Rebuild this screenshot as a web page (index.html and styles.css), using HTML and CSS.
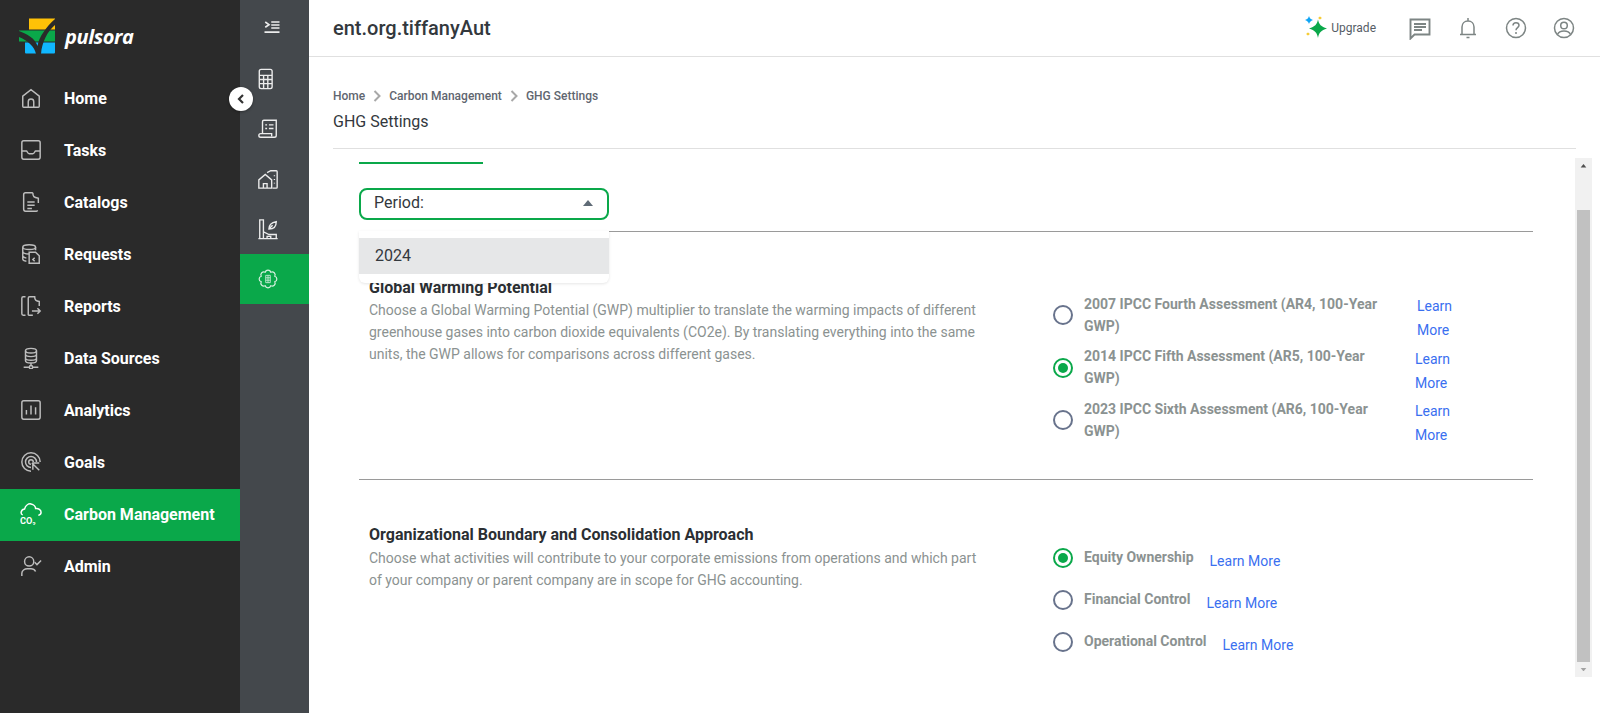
FILE: index.html
```html
<!DOCTYPE html>
<html lang="en">
<head>
<meta charset="utf-8">
<title>GHG Settings</title>
<link rel="stylesheet" href="styles.css">
</head>
<body>
<div class="app">
  <aside class="sidebar">
    <div class="brand">
      <svg class="logo" viewBox="0 0 40 40" width="40" height="40">
        <path d="M10 1.500h26v11H10z" fill="#ffc107"/>
        <path d="M0 13.500h36v11H0z" fill="#0aa84a"/>
        <path d="M6 25.500h30v10a1 1 0 0 1-1 1H7a1 1 0 0 1-1-1z" fill="#10b7ff"/>
        <path d="M0 14C8 17 16 21 18.500 29 20 20 27 10 36 2v6C28 15 23 25 22 37h-5C16 30 8 23 0 20z" fill="#2a2a2a"/>
      </svg>
      <span class="brand-name">pulsora</span>
    </div>
    <nav class="nav">
      <a class="nav-item"><svg class="nav-icon" viewBox="0 0 24 24"><path d="M3 21V10l9-7 9 7v11a1 1 0 0 1-1 1H4a1 1 0 0 1-1-1zM9 22v-6a3 3 0 0 1 6 0v6"/></svg><span>Home</span></a>
      <a class="nav-item"><svg class="nav-icon" viewBox="0 0 24 24"><rect x="2" y="2" width="20" height="20" rx="2"/><path d="M2 13h5c1 0 1 3 3 3h4c2 0 2-3 3-3h5"/></svg><span>Tasks</span></a>
      <a class="nav-item"><svg class="nav-icon" viewBox="0 0 24 24"><path d="M14 2H6a2 2 0 0 0-2 2v16a2 2 0 0 0 2 2h12a1 1 0 0 0 1-1M14 2c0 4 1 5 6 6v5M8 12h8M8 15.500h8M8 19h5"/></svg><span>Catalogs</span></a>
      <a class="nav-item"><svg class="nav-icon" viewBox="0 0 24 24"><ellipse cx="10" cy="4.500" rx="7" ry="2.500"/><path d="M3 4.500v13c0 1 1 2 4 2.500M3 9c0 2 4 3 7 3M3 14c0 1 1.500 2 4 2.500M17 4.500V8M10 10h7l4 4v8H10zM16 16l-2 2 2 2"/></svg><span>Requests</span></a>
      <a class="nav-item"><svg class="nav-icon" viewBox="0 0 24 24"><path d="M6 2H3.500A1.500 1.500 0 0 0 2 3.500v17A1.500 1.500 0 0 0 3.500 22H6M9 22V3.500A1.500 1.500 0 0 1 10.500 2H16c0 3 1 5 5 5v5M9 22h5M13 17.500h9M19 14.500l3 3-3 3"/></svg><span>Reports</span></a>
      <a class="nav-item"><svg class="nav-icon" viewBox="0 0 24 24"><ellipse cx="12" cy="4" rx="6" ry="2.500"/><path d="M6 4v11c0 1.500 3 2.500 6 2.500s6-1 6-2.500V4M6 8c0 1.500 3 2.500 6 2.500S18 9.500 18 8M6 12c0 1.500 3 2.500 6 2.500s6-1 6-2.500M12 17.500V20M4 22h6M14 22h6"/><circle cx="12" cy="22" r="1.800"/></svg><span>Data Sources</span></a>
      <a class="nav-item"><svg class="nav-icon" viewBox="0 0 24 24"><rect x="2" y="2" width="20" height="20" rx="2"/><path d="M7 17v-5M12 17V7M17 17v-8"/></svg><span>Analytics</span></a>
      <a class="nav-item"><svg class="nav-icon" viewBox="0 0 24 24"><path d="M12 22a10 10 0 1 1 10-10M12 18a6 6 0 1 1 6-6M12 14.500a2.500 2.500 0 1 1 2.500-2.500M13 13l8 8M14 20.500V13h7"/></svg><span>Goals</span></a>
      <a class="nav-item active"><svg class="nav-icon" viewBox="0 0 24 24"><path d="M3 13c-3-1-2-6 2-6.500C6 3 9 .5 12 1c3 .5 5 3 5 5 3-.5 6 1.500 6 4 0 2-1 3-3 3.500"/><text x="0" y="23" class="co-text">CO₂</text></svg><span>Carbon Management</span></a>
      <a class="nav-item"><svg class="nav-icon" viewBox="0 0 24 24"><circle cx="10" cy="7" r="5"/><path d="M2 23v-3c0-3 3-5 6-5h4c2 0 4 1 5 3M16 8l2.500 2.500L23 6"/></svg><span>Admin</span></a>
    </nav>
    <button class="collapse" type="button" aria-label="Collapse"><svg viewBox="0 0 12 12" width="12" height="12"><path d="M8 2L4 6l4 4" fill="none" stroke="#333" stroke-width="2.200"/></svg></button>
  </aside>

  <div class="rail">
    <div class="rail-item toggle"><svg class="rail-icon" viewBox="0 0 24 24"><path d="M3 4l5 3.500-5 3.500M11 4h11M11 8h11M11 12h11M2 17.500h20"/></svg></div>
    <div class="rail-item"><svg class="rail-icon" viewBox="0 0 24 24"><rect x="2.500" y="1.500" width="14" height="21" rx="2"/><path d="M2.500 8h14M2.500 12.500h14M2.500 17h14M7.200 8v14M11.800 8v14"/></svg></div>
    <div class="rail-item"><svg class="rail-icon" viewBox="0 0 24 24"><path d="M6 17V4a1.500 1.500 0 0 1 1.500-1.500H21V19a2 2 0 0 1-2 2H4a2 2 0 0 1-2-2c0-1 1-2 2-2h12v3M9 7.500h2M13 7.500h5M9 11.500h2M13 11.500h5"/></svg></div>
    <div class="rail-item"><svg class="rail-icon" viewBox="0 0 24 24"><path d="M2 22V13l7-6 7 6v9zM7 22v-5h4v5M11 5l4-2h6a1 1 0 0 1 1 1v17a1 1 0 0 1-1 1h-4M19 8v1M19 12v1M19 16v1"/></svg></div>
    <div class="rail-item"><svg class="rail-icon" viewBox="0 0 24 24"><path d="M1.500 22.500h21M3 22.500V2h4v20.500M7 15l6 3h8v4.500M11 22.500V20h4v2.500M13 12c0-4 3-7 8-8 0 5-3 8-8 8zM13 12l4-4"/></svg></div>
    <div class="rail-item active"><svg class="rail-icon" viewBox="0 0 24 24"><path d="M19.390 8.940A3.200 3.200 0 0 1 19.390 15.060A3.200 3.200 0 0 1 15.060 19.390A3.200 3.200 0 0 1 8.940 19.390A3.200 3.200 0 0 1 4.610 15.060A3.200 3.200 0 0 1 4.610 8.940A3.200 3.200 0 0 1 8.940 4.610A3.200 3.200 0 0 1 15.060 4.610A3.200 3.200 0 0 1 19.390 8.940z"/><path class="grid" d="M9.500 8h5v8h-5zM9.500 10.700h5M9.500 13.300h5M12 8v8"/></svg></div>
  </div>

  <main class="main">
    <header class="topbar">
      <h1 class="org">ent.org.tiffanyAut</h1>
      <div class="top-actions">
        <a class="upgrade">
          <svg viewBox="0 0 26 26" width="26" height="26">
            <path d="M14 4.500c1 5 3 7 9 9-6 2-8 4-9 9.500-1-5.500-3-7.500-9-9.500 6-2 8-4 9-9z" fill="#0aa84a"/>
            <path d="M5 1c.5 2 1.500 3 4 4-2.500 1-3.500 2-4 4-.5-2-1.500-3-4-4 2.500-1 3.500-2 4-4z" fill="#10a5f5"/>
            <path d="M16 1c.3 1 .7 1.500 2 2-1.300.5-1.700 1-2 2-.3-1-.7-1.500-2-2 1.300-.5 1.700-1 2-2zM4 17c.3 1 .7 1.500 2 2-1.300.5-1.700 1-2 2-.3-1-.7-1.500-2-2 1.300-.5 1.700-1 2-2z" fill="#f5c518"/>
          </svg>
          <span>Upgrade</span>
        </a>
        <svg class="top-icon chat" viewBox="0 0 24 24"><path d="M2.500 3.500h19v15H6.500l-4 4zM6 8h12M6 11h12M6 14h8"/></svg>
        <svg class="top-icon" viewBox="0 0 24 24"><path d="M4 18.500h16M6 18.500V11c0-3.500 2.500-6 6-6s6 2.500 6 6v7.500M12 2v3M10.500 21.500h3"/></svg>
        <svg class="top-icon" viewBox="0 0 24 24"><circle cx="12" cy="12" r="9.500"/><path d="M9 9.500C9 7.500 10.500 6.700 12 6.700c1.700 0 3 1 3 2.600 0 2.300-3 2.300-3 5M12 16v2"/></svg>
        <svg class="top-icon" viewBox="0 0 24 24"><circle cx="12" cy="12" r="9.500"/><circle cx="12" cy="9.500" r="3.300"/><path d="M5.500 18.500c1-2.500 3.500-3.500 6.500-3.500s5.500 1 6.500 3.500"/></svg>
      </div>
    </header>

    <div class="page">
      <div class="page-head">
        <div class="crumbs">
          <span>Home</span><svg class="sep" viewBox="0 0 8 12"><path d="M1.500 1l5 5-5 5"/></svg>
          <span>Carbon Management</span><svg class="sep" viewBox="0 0 8 12"><path d="M1.500 1l5 5-5 5"/></svg>
          <span>GHG Settings</span>
        </div>
        <h2 class="page-title">GHG Settings</h2>
      </div>

      <div class="panel">
        <div class="panel-body">
          <div class="tab-line"></div>
          <div class="select-wrap">
            <div class="select"><span>Period:</span><svg viewBox="0 0 10 6" width="10" height="6"><path d="M0 6l5-6 5 6z" fill="#5f6b76"/></svg></div>
            <div class="dropdown"><div class="option">2024</div></div>
          </div>
          <section class="setting first">
            <div class="setting-text">
              <h3>Global Warming Potential</h3>
              <p>Choose a Global Warming Potential (GWP) multiplier to translate the warming impacts of different greenhouse gases into carbon dioxide equivalents (CO2e). By translating everything into the same units, the GWP allows for comparisons across different gases.</p>
            </div>
            <div class="options">
              <div class="opt-row wide"><span class="radio"></span><span class="opt-label">2007 IPCC Fourth Assessment (AR4, 100-Year GWP)</span><a class="learn narrow far">Learn More</a></div>
              <div class="opt-row wide"><span class="radio on"></span><span class="opt-label">2014 IPCC Fifth Assessment (AR5, 100-Year GWP)</span><a class="learn narrow">Learn More</a></div>
              <div class="opt-row wide"><span class="radio"></span><span class="opt-label">2023 IPCC Sixth Assessment (AR6, 100-Year GWP)</span><a class="learn narrow">Learn More</a></div>
            </div>
          </section>
          <section class="setting second">
            <div class="setting-text">
              <h3>Organizational Boundary and Consolidation Approach</h3>
              <p>Choose what activities will contribute to your corporate emissions from operations and which part of your company or parent company are in scope for GHG accounting.</p>
            </div>
            <div class="options compact">
              <div class="opt-row"><span class="radio on"></span><span class="opt-label">Equity Ownership</span><a class="learn">Learn More</a></div>
              <div class="opt-row"><span class="radio"></span><span class="opt-label">Financial Control</span><a class="learn">Learn More</a></div>
              <div class="opt-row"><span class="radio"></span><span class="opt-label">Operational Control</span><a class="learn">Learn More</a></div>
            </div>
          </section>
        </div>
        <div class="scrollbar">
          <svg viewBox="0 0 8 5" width="9" height="5"><path d="M0 5l4-5 4 5z" fill="#505050"/></svg>
          <div class="track"><div class="thumb"></div></div>
          <svg viewBox="0 0 8 5" width="9" height="5"><path d="M0 0l4 5 4-5z" fill="#a3a3a3"/></svg>
        </div>
      </div>
    </div>
  </main>
</div>
</body>
</html>
```
FILE: styles.css
```css
* { box-sizing: border-box; }
html, body { margin: 0; height: 100%; overflow: hidden; }
body { font-family: Roboto, "Liberation Sans", sans-serif; color: #2b2f33; background: #fff; }
h1, h2, h3, p { margin: 0; }

.app { display: flex; height: 713px; }

.sidebar { position: relative; width: 240px; flex: none; background: #2a2a2a; color: #fff; }
.brand { display: flex; align-items: center; gap: 6px; height: 73px; padding: 0 0 0 19px; }
.logo { display: block; }
.brand-name { font-family: "Open Sans", sans-serif; font-style: italic; font-weight: 700; font-size: 20px; letter-spacing: -.4px; color: #fff; margin-top: -1px; }
.nav { display: flex; flex-direction: column; }
.nav-item { display: flex; align-items: center; height: 52px; padding: 0 0 2px 20px; gap: 22px; font-size: 16px; font-weight: 700; color: #fff; }
.nav-item.active { background: #0aa84a; }
.nav-icon { width: 22px; height: 22px; flex: none; fill: none; stroke: #bdbdbd; stroke-width: 1.600; }
.nav-item.active .nav-icon { stroke: #fff; }
.co-text { font: 700 10px Roboto, sans-serif; fill: #fff; stroke: none; }
.collapse { position: absolute; top: 87px; left: 229px; width: 24px; height: 24px; padding: 0; border: 0; border-radius: 50%; background: #fff; display: flex; align-items: center; justify-content: center; box-shadow: 0 1px 3px rgba(0,0,0,.35); z-index: 3; }

.rail { width: 69px; flex: none; background: #44484c; display: flex; flex-direction: column; padding-top: 2px; }
.rail-item { height: 50px; display: flex; align-items: center; justify-content: center; padding-right: 13px; }
.rail-item.toggle { padding-right: 5px; height: 52px; }
.rail-item.active { background: #0aa84a; }
.rail-icon { width: 22px; height: 22px; fill: none; stroke: #ececec; stroke-width: 1.500; }
.rail-item.toggle .rail-icon { width: 18px; height: 18px; stroke-width: 2.200; }
.rail-item.active .rail-icon { stroke: #d5efdf; stroke-width: 1.300; }
.rail-item.active .rail-icon .grid { stroke-width: .9; }

.main { flex: 1; min-width: 0; display: flex; flex-direction: column; }
.topbar { height: 57px; flex: none; border-bottom: 1px solid #e0e0e0; display: flex; align-items: center; justify-content: space-between; padding: 0 24px 0 24px; }
.org { font-size: 20px; font-weight: 500; color: #33383d; }
.top-actions { display: flex; align-items: center; }
.upgrade { display: flex; align-items: center; font-size: 12px; font-weight: 400; color: #565d66; margin-right: 32px; }
.upgrade svg { margin-right: 1px; }
.top-icon { width: 24px; height: 24px; fill: none; stroke: #7d8584; stroke-width: 1.500; margin-left: 24px; }
.top-icon.chat { stroke-width: 1.900; }
.upgrade + .top-icon { margin-left: 0; }

.page { flex: 1; min-height: 0; padding: 31px 8px 0 24px; display: flex; flex-direction: column; }
.page-head { height: 61px; flex: none; border-bottom: 1px solid #e0e0e0; margin-right: 16px; }
.crumbs { display: flex; align-items: center; font-size: 12px; font-weight: 500; color: #5f6670; height: 16px; }
.sep { width: 8px; height: 12px; margin: 0 8px; fill: none; stroke: #a8a8a8; stroke-width: 2; }
.page-title { font-size: 16px; font-weight: 400; color: #33383d; margin-top: 8px; line-height: 20px; }

.panel { display: flex; margin-top: 9px; height: 520px; }
.panel-body { flex: 1; min-width: 0; position: relative; padding-left: 26px; }
.tab-line { width: 124px; height: 2px; background: #0aa84a; margin-top: 4px; }
.select-wrap { position: relative; width: 250px; margin-top: 24px; z-index: 2; }
.select { height: 32px; border: 2px solid #0aa84a; border-radius: 8px; display: flex; align-items: center; justify-content: space-between; padding: 0 14px 3px 13px; font-size: 16px; color: #33383d; }
.dropdown { position: absolute; top: 43px; left: 0; right: 0; height: 52px; padding: 7px 0 0; background: #fff; border-radius: 0 0 6px 6px; box-shadow: 0 1px 3px rgba(0,0,0,.1); }
.option { height: 36px; background: #e6e7e8; font-size: 16px; line-height: 36px; padding-left: 16px; color: #33383d; }

.setting { display: grid; grid-template-columns: 664px 1fr; border-top: 1px solid #9a9a9a; margin-right: 42px; padding-left: 10px; }
.setting.first { margin-top: 11px; height: 248px; padding-top: 45px; }
.setting.second { padding-top: 44px; }
.setting-text { width: 615px; }
.setting h3 { font-size: 16px; font-weight: 700; line-height: 21px; color: #2b2f33; }
.setting p { font-size: 14px; line-height: 22px; color: #8b9291; margin-top: 1px; }
.setting.second p { margin-top: 2px; }
.options { padding-left: 20px; margin-top: 14px; }
.options.compact { margin-top: 23px; }
.opt-row { display: flex; align-items: flex-start; min-height: 42px; }
.opt-row.wide { height: 52.500px; }
.radio { width: 20px; height: 20px; flex: none; border: 2px solid #68738c; border-radius: 50%; margin-right: 11px; position: relative; margin-top: 1px; }
.opt-row.wide .radio { margin-top: 14px; }
.radio.on { border-color: #0aa84a; }
.radio.on::after { content: ""; position: absolute; inset: 3px; border-radius: 50%; background: #0aa84a; }
.opt-label { font-size: 14px; font-weight: 700; color: #8b9291; line-height: 22px; margin-top: -1px; }
.opt-row.wide .opt-label { width: 300px; margin-top: 1.500px; }
.learn { font-size: 14px; line-height: 24px; color: #3a6ff0; margin-left: 16px; margin-top: 2px; }
.learn.narrow { width: 45px; margin-left: 31px; margin-top: 3px; }
.learn.narrow.far { margin-left: 33px; }

.scrollbar { width: 17px; flex: none; height: 519px; background: #f1f1f1; display: flex; flex-direction: column; align-items: center; padding: 6px 0; }
.track { flex: 1; width: 13px; padding-top: 42px; margin-bottom: 6px; }
.thumb { height: 452px; background: #c1c1c1; }
```
